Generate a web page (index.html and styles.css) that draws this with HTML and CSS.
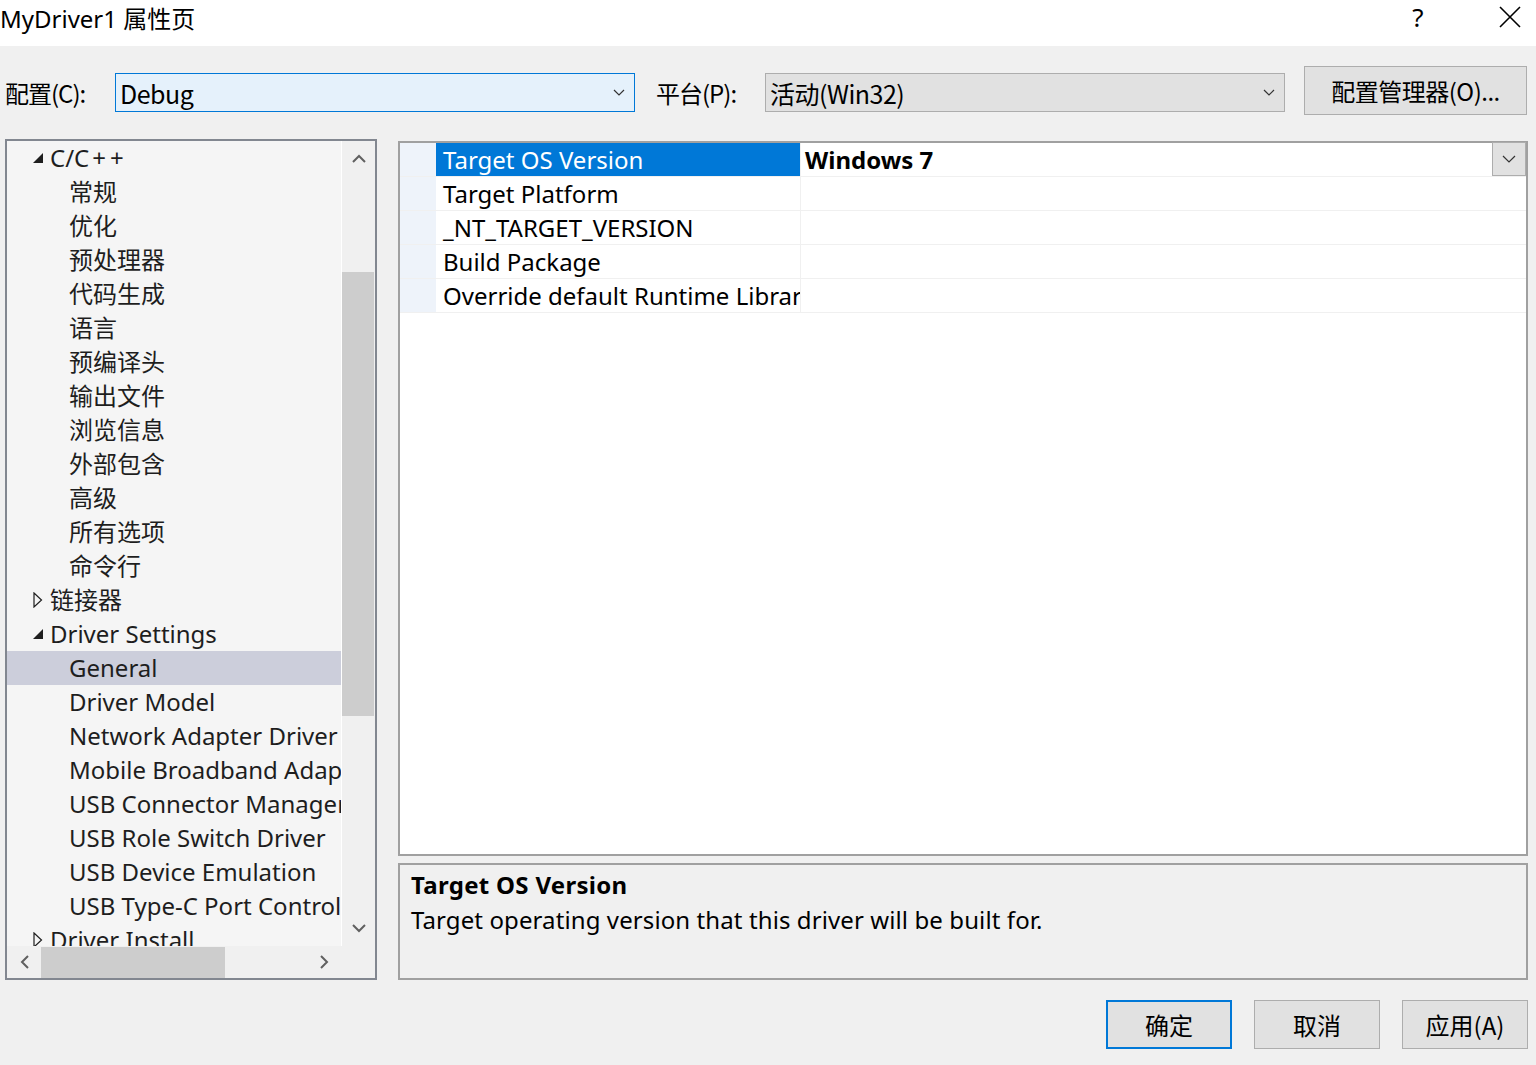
FILE: index.html
```html
<!DOCTYPE html>
<html lang="zh-CN">
<head>
    <meta charset="UTF-8">
    <title>MyDriver1 属性页</title>
    <link rel="stylesheet" href="styles.css">
</head>
<body>
<div class="dialog">
    <div class="titlebar">
        <span class="title">MyDriver1 属性页</span>
        <span class="tb-help">?</span>
        <span class="tb-close">
            <svg width="22" height="22" viewBox="0 0 22 22"><path d="M1 1L21 21M21 1L1 21" stroke="#000" stroke-width="1.6" fill="none"/></svg>
        </span>
    </div>

    <div class="toolbar">
        <span class="lbl lbl-conf">配置(C):</span>
        <div class="combo combo-focus">
            <span class="combo-text">Debug</span>
            <svg class="chev" width="12" height="8" viewBox="0 0 12 8"><path d="M1 1L6 6L11 1" stroke="#333" stroke-width="1.2" fill="none"/></svg>
        </div>
        <span class="lbl lbl-plat">平台(P):</span>
        <div class="combo combo-gray">
            <span class="combo-text">活动(Win32)</span>
            <svg class="chev" width="12" height="8" viewBox="0 0 12 8"><path d="M1 1L6 6L11 1" stroke="#333" stroke-width="1.2" fill="none"/></svg>
        </div>
        <button class="btn btn-mgr">配置管理器(O)...</button>
    </div>

    <div class="content">
        <div class="tree-panel">
            <div class="tree">
                <div class="node parent"><svg class="tri" width="10" height="10" viewBox="0 0 10 10"><path d="M10 0L10 10L0 10Z" fill="#1e1e1e"/></svg>C/C<span class="plus">++</span></div>
                <div class="node child">常规</div>
                <div class="node child">优化</div>
                <div class="node child">预处理器</div>
                <div class="node child">代码生成</div>
                <div class="node child">语言</div>
                <div class="node child">预编译头</div>
                <div class="node child">输出文件</div>
                <div class="node child">浏览信息</div>
                <div class="node child">外部包含</div>
                <div class="node child">高级</div>
                <div class="node child">所有选项</div>
                <div class="node child">命令行</div>
                <div class="node parent"><svg class="tri" width="10" height="16" viewBox="0 0 10 16"><path d="M1 1L8.5 8L1 15Z" stroke="#1e1e1e" stroke-width="1.2" fill="none"/></svg>链接器</div>
                <div class="node parent"><svg class="tri" width="10" height="10" viewBox="0 0 10 10"><path d="M10 0L10 10L0 10Z" fill="#1e1e1e"/></svg>Driver Settings</div>
                <div class="node child selected">General</div>
                <div class="node child">Driver Model</div>
                <div class="node child">Network Adapter Driver</div>
                <div class="node child">Mobile Broadband Adapter</div>
                <div class="node child">USB Connector Manager</div>
                <div class="node child">USB Role Switch Driver</div>
                <div class="node child">USB Device Emulation</div>
                <div class="node child">USB Type-C Port Controller</div>
                <div class="node parent"><svg class="tri" width="10" height="16" viewBox="0 0 10 16"><path d="M1 1L8.5 8L1 15Z" stroke="#1e1e1e" stroke-width="1.2" fill="none"/></svg>Driver Install</div>
            </div>
            <div class="vscroll">
                <svg class="arrow" width="14" height="9" viewBox="0 0 14 9"><path d="M1 8L7 2L13 8" stroke="#606060" stroke-width="2" fill="none"/></svg>
                <div class="vtrack"><div class="vthumb"></div></div>
                <svg class="arrow" width="14" height="9" viewBox="0 0 14 9"><path d="M1 1L7 7L13 1" stroke="#606060" stroke-width="2" fill="none"/></svg>
            </div>
            <div class="hscroll">
                <svg class="arrow" width="9" height="14" viewBox="0 0 9 14"><path d="M8 1L2 7L8 13" stroke="#606060" stroke-width="2" fill="none"/></svg>
                <div class="htrack"><div class="hthumb"></div></div>
                <svg class="arrow" width="9" height="14" viewBox="0 0 9 14"><path d="M1 1L7 7L1 13" stroke="#606060" stroke-width="2" fill="none"/></svg>
            </div>
            <div class="corner"></div>
        </div>

        <div class="right">
            <div class="grid">
                <div class="prow">
                    <div class="margin"></div>
                    <div class="pname active">Target OS Version</div>
                    <div class="pval bold">Windows 7
                        <span class="dd-btn"><svg width="14" height="8" viewBox="0 0 14 8"><path d="M1 1L7 7L13 1" stroke="#333" stroke-width="1.2" fill="none"/></svg></span>
                    </div>
                </div>
                <div class="prow">
                    <div class="margin"></div>
                    <div class="pname">Target Platform</div>
                    <div class="pval"></div>
                </div>
                <div class="prow">
                    <div class="margin"></div>
                    <div class="pname">_NT_TARGET_VERSION</div>
                    <div class="pval"></div>
                </div>
                <div class="prow">
                    <div class="margin"></div>
                    <div class="pname">Build Package</div>
                    <div class="pval"></div>
                </div>
                <div class="prow">
                    <div class="margin"></div>
                    <div class="pname">Override default Runtime Library</div>
                    <div class="pval"></div>
                </div>
            </div>
            <div class="desc">
                <div class="desc-title">Target OS Version</div>
                <div class="desc-text">Target operating version that this driver will be built for.</div>
            </div>
        </div>
    </div>

    <div class="footer">
        <button class="btn btn-foot btn-default">确定</button>
        <button class="btn btn-foot">取消</button>
        <button class="btn btn-foot">应用(A)</button>
    </div>
</div>
</body>
</html>
```

FILE: styles.css
```css
* {
    box-sizing: border-box;
}

body {
    margin: 0;
    background: #f0f0f0;
    font-family: "Noto Sans", "Noto Sans CJK SC", sans-serif;
    color: #000;
}

.dialog {
    width: 1536px;
    height: 1065px;
    display: flex;
    flex-direction: column;
    overflow: hidden;
}

/* 标题栏 */
.titlebar {
    height: 46px;
    background: #ffffff;
    display: flex;
    align-items: center;
    flex-shrink: 0;
}

.title {
    flex: 1;
    font-size: 24px;
    padding-bottom: 12px;
}

.tb-help {
    width: 30px;
    font-size: 26px;
    text-align: center;
    padding-bottom: 12px;
    margin-right: 62px;
}

.tb-close {
    width: 30px;
    margin-right: 11px;
    padding-bottom: 12px;
    display: flex;
    justify-content: center;
}

/* 配置 / 平台 */
.toolbar {
    height: 93px;
    display: flex;
    align-items: center;
    padding: 0 9px 0 5px;
    flex-shrink: 0;
}

.lbl {
    font-family: "Noto Sans CJK SC", sans-serif;
    font-size: 24px;
    letter-spacing: -1px;
}

.lbl-conf {
    width: 110px;
}

.lbl-plat {
    margin-left: 21px;
    width: 109px;
}

.combo {
    width: 520px;
    height: 39px;
    display: flex;
    align-items: center;
    justify-content: space-between;
    padding: 0 9px 0 4px;
    font-family: "Noto Sans CJK SC", sans-serif;
    font-size: 25px;
}

.combo-text {
    letter-spacing: -0.5px;
}

.combo-focus {
    background: #e5f1fb;
    border: 1px solid #0078d7;
}

.combo-gray {
    background: #e1e1e1;
    border: 1px solid #adadad;
}

.btn {
    background: #e1e1e1;
    border: 1px solid #adadad;
    font-family: "Noto Sans CJK SC", sans-serif;
    font-size: 24px;
    color: #000;
    padding: 0;
}

.btn-mgr {
    margin-left: auto;
    width: 223px;
    height: 49px;
    margin-top: -4px;
    letter-spacing: -0.5px;
}

/* 主体 */
.content {
    display: flex;
    gap: 21px;
    padding: 0 8px 0 5px;
    height: 841px;
    flex-shrink: 0;
}

.tree-panel {
    width: 372px;
    height: 841px;
    border: 2px solid #828790;
    background: #f0f0f0;
    display: grid;
    grid-template-columns: 1fr 33px;
    grid-template-rows: 1fr 32px;
}

.tree {
    background: #f5f5f5;
    overflow: hidden;
    border-right: 1px solid #ffffff;
}

.node {
    height: 34px;
    line-height: 34px;
    font-size: 24px;
    color: #1e1e1e;
    white-space: nowrap;
    display: flex;
    align-items: center;
}

.plus {
    letter-spacing: 4px;
    padding-left: 3px;
}

.parent {
    padding-left: 26px;
}

.parent .tri {
    margin-right: 7px;
}

.child {
    padding-left: 62px;
}

.selected {
    background: #cccedb;
}

.vscroll {
    display: flex;
    flex-direction: column;
    align-items: center;
    background: #f0f0f0;
}

.vscroll .arrow {
    margin: 13px 0;
}

.vtrack {
    flex: 1;
    width: 100%;
    padding-right: 1px;
}

.vthumb {
    margin-top: 96px;
    height: 444px;
    background: #cdcdcd;
}

.hscroll {
    display: flex;
    align-items: center;
    background: #f0f0f0;
    padding: 0 13px;
}

.htrack {
    flex: 1;
    height: 100%;
    padding: 1px 80px 0 12px;
}

.hthumb {
    width: 184px;
    height: 31px;
    background: #cdcdcd;
}

.corner {
    background: #f0f0f0;
}

/* 属性表 */
.right {
    flex: 1;
    display: flex;
    flex-direction: column;
    gap: 7px;
    padding-top: 2px;
}

.grid {
    height: 715px;
    border: 2px solid #a0a0a0;
    background: #ffffff;
}

.prow {
    height: 34px;
    display: flex;
    border-bottom: 1px solid #f0f0f0;
    font-size: 24px;
}

.margin {
    width: 36px;
    background: #eef3fa;
}

.pname {
    width: 365px;
    padding-left: 7px;
    line-height: 33px;
    white-space: nowrap;
    overflow: hidden;
    border-right: 1px solid #f0f0f0;
}

.pname.active {
    background: #0078d7;
    color: #ffffff;
}

.pval {
    flex: 1;
    display: flex;
    align-items: center;
    justify-content: space-between;
    padding-left: 4px;
}

.bold {
    font-weight: bold;
}

.dd-btn {
    width: 34px;
    height: 34px;
    margin-top: -1px;
    background: #e1e1e1;
    border: 1px solid #adadad;
    display: flex;
    align-items: center;
    justify-content: center;
}

.desc {
    height: 117px;
    border: 2px solid #a0a0a0;
    background: #f0f0f0;
    padding: 3px 11px;
}

.desc-title {
    font-size: 24px;
    font-weight: bold;
    line-height: 34px;
    letter-spacing: 0.3px;
}

.desc-text {
    font-size: 24px;
    line-height: 36px;
    letter-spacing: 0.1px;
}

/* 底部按钮 */
.footer {
    display: flex;
    justify-content: flex-end;
    gap: 22px;
    padding: 20px 8px 0 0;
}

.btn-foot {
    width: 126px;
    height: 49px;
}

.btn-default {
    border: 2px solid #0078d7;
}
```
